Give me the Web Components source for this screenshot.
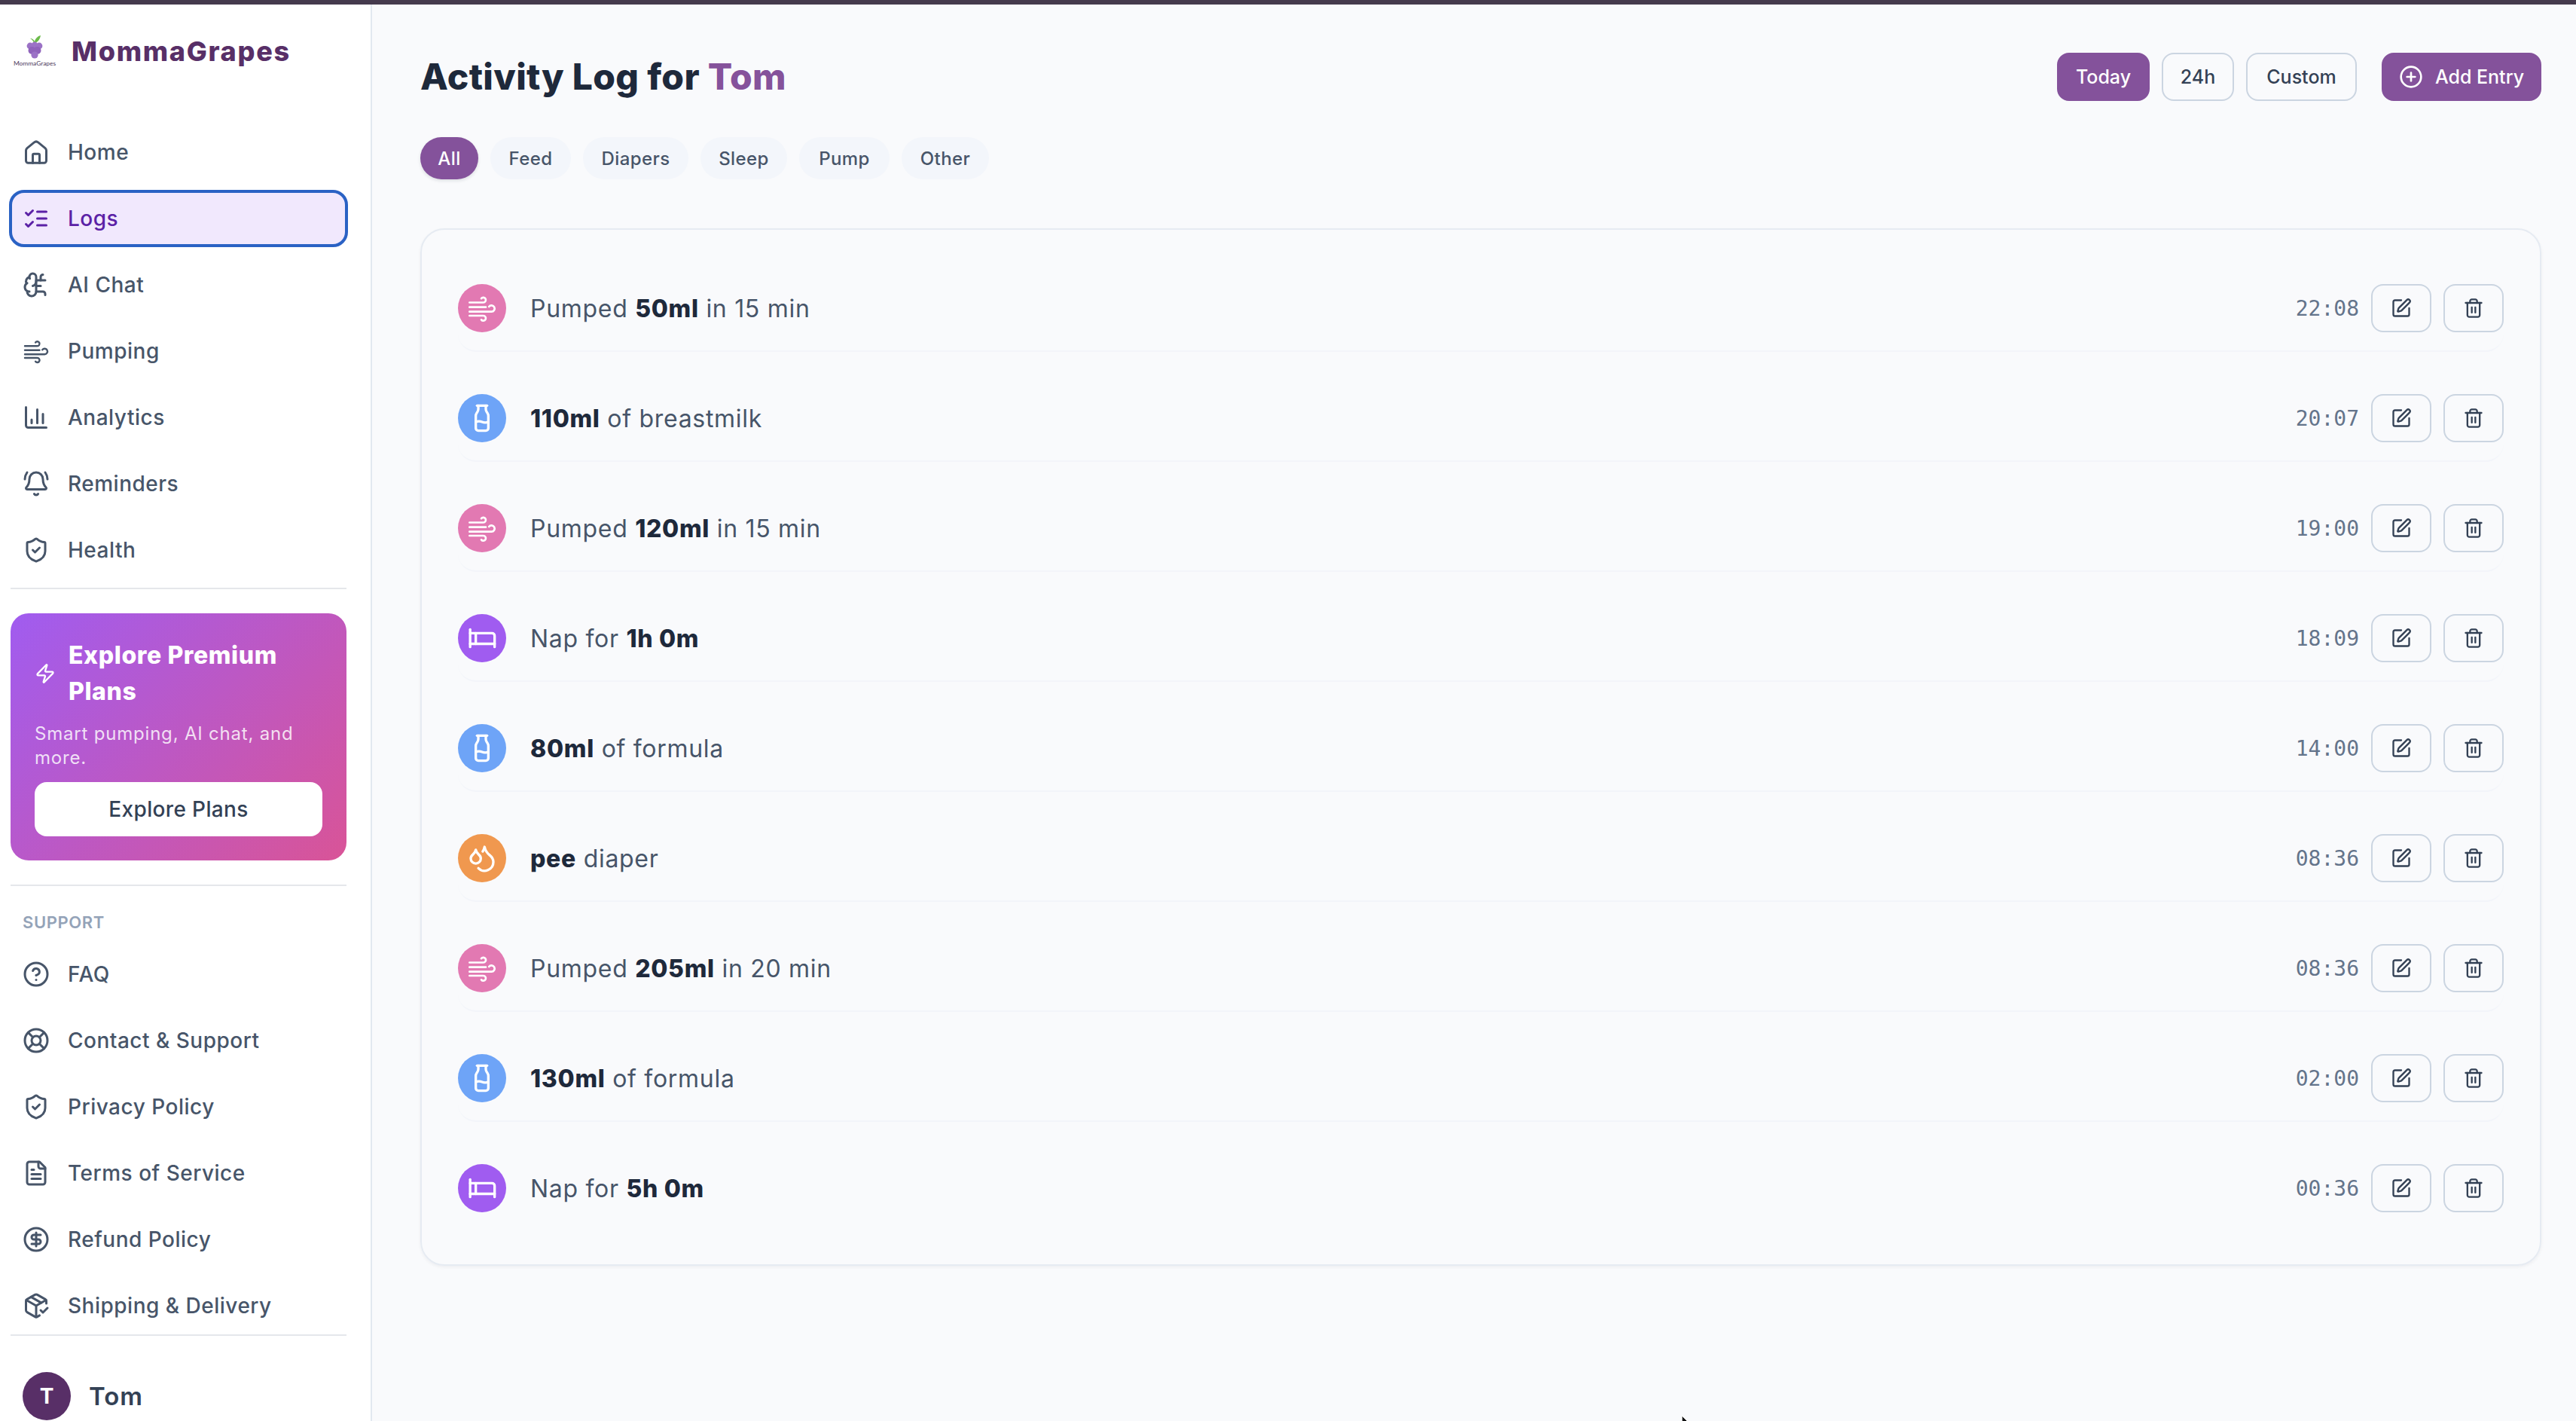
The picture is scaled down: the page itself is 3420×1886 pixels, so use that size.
<!DOCTYPE html>
<html lang="en">
<head>
<meta charset="utf-8">
<title>MommaGrapes - Activity Log</title>
<style>
  html, body { margin: 0; height: 100%; }
  body { background: #f9fafc; font-family: Inter, "Liberation Sans", sans-serif; overflow: hidden; }
</style>
</head>
<body>
<mg-app>
  <mg-sidebar slot="side">
    <mg-nav icon="home">Home</mg-nav>
    <mg-nav icon="logs" active>Logs</mg-nav>
    <mg-nav icon="brain">AI Chat</mg-nav>
    <mg-nav icon="wind">Pumping</mg-nav>
    <mg-nav icon="chart">Analytics</mg-nav>
    <mg-nav icon="bell">Reminders</mg-nav>
    <mg-nav icon="shield">Health</mg-nav>
    <mg-promo slot="promo"></mg-promo>
    <mg-nav slot="support" icon="help">FAQ</mg-nav>
    <mg-nav slot="support" icon="buoy">Contact &amp; Support</mg-nav>
    <mg-nav slot="support" icon="shield">Privacy Policy</mg-nav>
    <mg-nav slot="support" icon="file">Terms of Service</mg-nav>
    <mg-nav slot="support" icon="dollar">Refund Policy</mg-nav>
    <mg-nav slot="support" icon="package">Shipping &amp; Delivery</mg-nav>
  </mg-sidebar>
  <mg-log slot="main">
    <mg-btn slot="ranges" solid style="width:123px">Today</mg-btn>
    <mg-btn slot="ranges" style="width:96px">24h</mg-btn>
    <mg-btn slot="ranges" style="width:147px">Custom</mg-btn>
    <mg-btn slot="add" solid icon="plus" style="width:212px">Add Entry</mg-btn>
    <mg-pill slot="pills" active style="width:77px">All</mg-pill>
    <mg-pill slot="pills" style="width:107px">Feed</mg-pill>
    <mg-pill slot="pills" style="width:140px">Diapers</mg-pill>
    <mg-pill slot="pills" style="width:115px">Sleep</mg-pill>
    <mg-pill slot="pills" style="width:120px">Pump</mg-pill>
    <mg-pill slot="pills" style="width:116px">Other</mg-pill>
    <mg-row kind="pump" time="22:08">Pumped <strong>50ml</strong> in 15 min</mg-row>
    <mg-row kind="feed" time="20:07"><strong>110ml</strong> of breastmilk</mg-row>
    <mg-row kind="pump" time="19:00">Pumped <strong>120ml</strong> in 15 min</mg-row>
    <mg-row kind="sleep" time="18:09">Nap for <strong>1h 0m</strong></mg-row>
    <mg-row kind="feed" time="14:00"><strong>80ml</strong> of formula</mg-row>
    <mg-row kind="diaper" time="08:36"><strong>pee</strong> diaper</mg-row>
    <mg-row kind="pump" time="08:36">Pumped <strong>205ml</strong> in 20 min</mg-row>
    <mg-row kind="feed" time="02:00"><strong>130ml</strong> of formula</mg-row>
    <mg-row kind="sleep" time="00:36" last>Nap for <strong>5h 0m</strong></mg-row>
  </mg-log>
</mg-app>

<script>
const ICONS = {
  home: '<path d="M3 10.5c0-.9.3-1.5 1-2.1l6.3-5.1a2.6 2.6 0 0 1 3.4 0L20 8.4c.7.6 1 1.2 1 2.1v9a2 2 0 0 1-2 2H5a2 2 0 0 1-2-2z"/><path d="M9 21.5v-7a1 1 0 0 1 1-1h4a1 1 0 0 1 1 1v7"/>',
  logs: '<path d="m3 17 2 2 4-4"/><path d="m3 7 2 2 4-4"/><path d="M13 6h8"/><path d="M13 12h8"/><path d="M13 18h8"/>',
  brain: '<path d="M12 5a3 3 0 1 0-5.997.125 4 4 0 0 0-2.526 5.77 4 4 0 0 0 .556 6.588A4 4 0 1 0 12 18Z"/><path d="M9 13a4.5 4.5 0 0 0 3-4"/><path d="M6.003 5.125A3 3 0 0 0 6.401 6.5"/><path d="M3.477 10.896a4 4 0 0 1 .585-.396"/><path d="M6 18a4 4 0 0 1-1.967-.516"/><path d="M12 13h4"/><path d="M12 18h6a2 2 0 0 1 2 2v1"/><path d="M12 8h8"/><path d="M16 8V5a2 2 0 0 1 2-2"/>',
  wind: '<path d="M2 7.5h11a2 2 0 1 0-1.6-3.2"/><path d="M2 11.2h13"/><path d="M2 14.8h17.5a2.5 2.5 0 1 0-2-4"/><path d="M2 18h11a2 2 0 1 1-1.6 3.2"/>',
  chart: '<path d="M3 3v16a2 2 0 0 0 2 2h16"/><path d="M18 17V9"/><path d="M13 17V5"/><path d="M8 17v-3"/>',
  bell: '<path d="M10.268 21a2 2 0 0 0 3.464 0"/><path d="M22 8c0-2.3-.8-4.3-2-6"/><path d="M3.262 15.326A1 1 0 0 0 4 17h16a1 1 0 0 0 .74-1.673C19.41 13.956 18 12.499 18 8A6 6 0 0 0 6 8c0 4.499-1.411 5.956-2.738 7.326"/><path d="M4 2C2.8 3.7 2 5.7 2 8"/>',
  shield: '<path d="M20 13c0 5-3.5 7.5-7.66 8.95a1 1 0 0 1-.67-.01C7.5 20.5 4 18 4 13V6a1 1 0 0 1 1-1c2 0 4.5-1.2 6.24-2.72a1.17 1.17 0 0 1 1.52 0C14.51 3.81 17 5 19 5a1 1 0 0 1 1 1z"/><path d="m9 12 2 2 4-4"/>',
  help: '<circle cx="12" cy="12" r="10"/><path d="M9.09 9a3 3 0 0 1 5.83 1c0 2-3 3-3 3"/><path d="M12 17h.01"/>',
  buoy: '<circle cx="12" cy="12" r="10"/><path d="m4.93 4.93 4.24 4.24"/><path d="m14.83 9.17 4.24-4.24"/><path d="m14.83 14.83 4.24 4.24"/><path d="m9.17 14.83-4.24 4.24"/><circle cx="12" cy="12" r="4"/>',
  file: '<path d="M15 2H6a2 2 0 0 0-2 2v16a2 2 0 0 0 2 2h12a2 2 0 0 0 2-2V7Z"/><path d="M14 2v4a2 2 0 0 0 2 2h4"/><path d="M10 9H8"/><path d="M16 13H8"/><path d="M16 17H8"/>',
  dollar: '<circle cx="12" cy="12" r="10"/><path d="M16 8h-6a2 2 0 1 0 0 4h4a2 2 0 1 1 0 4H8"/><path d="M12 18V6"/>',
  package: '<path d="m16 16 2 2 4-4"/><path d="M21 10V8a2 2 0 0 0-1-1.73l-7-4a2 2 0 0 0-2 0l-7 4A2 2 0 0 0 3 8v8a2 2 0 0 0 1 1.73l7 4a2 2 0 0 0 2 0l2-1.14"/><path d="m7.5 4.27 9 5.15"/><path d="M3.29 7 12 12l8.71-5"/><path d="M12 22V12"/>',
  zap: '<path d="M4 14a1 1 0 0 1-.78-1.63l9.9-10.2a.5.5 0 0 1 .86.46l-1.92 6.02A1 1 0 0 0 13 10h7a1 1 0 0 1 .78 1.63l-9.9 10.2a.5.5 0 0 1-.86-.46l1.92-6.02A1 1 0 0 0 11 14z"/>',
  plus: '<circle cx="12" cy="12" r="10"/><path d="M8 12h8"/><path d="M12 8v8"/>',
  edit: '<path d="M12 3H5a2 2 0 0 0-2 2v14a2 2 0 0 0 2 2h14a2 2 0 0 0 2-2v-7"/><path d="M18.375 2.625a1 1 0 0 1 3 3l-9.013 9.014a2 2 0 0 1-.853.505l-2.873.84a.5.5 0 0 1-.62-.62l.84-2.873a2 2 0 0 1 .506-.852z"/>',
  trash: '<path d="M3 6h18"/><path d="M19 6v14c0 1-1 2-2 2H7c-1 0-2-1-2-2V6"/><path d="M8 6V4c0-1 1-2 2-2h4c1 0 2 1 2 2v2"/><path d="M10 11v6"/><path d="M14 11v6"/>',
  milk: '<path d="M8 2h8"/><path d="M9 2v2.789a4 4 0 0 1-.672 2.219l-.656.984A4 4 0 0 0 7 10.212V20a2 2 0 0 0 2 2h6a2 2 0 0 0 2-2v-9.789a4 4 0 0 0-.672-2.219l-.656-.984A4 4 0 0 1 15 4.788V2"/><path d="M7 15a6.472 6.472 0 0 1 5 0 6.47 6.47 0 0 0 5 0"/>',
  bed: '<path d="M2.5 5v14"/><path d="M2.5 8H20a2 2 0 0 1 2 2v9"/><path d="M2.5 16.5H22"/><path d="M7 8v8.5"/>',
  drops: '<path d="M7 16.3c2.2 0 4-1.83 4-4.05 0-1.16-.57-2.26-1.71-3.19S7.29 6.75 7 5.3c-.29 1.45-1.14 2.84-2.29 3.76S3 11.1 3 12.25c0 2.22 1.8 4.05 4 4.05z"/><path d="M12.56 6.6A10.97 10.97 0 0 0 14 3.02c.5 2.5 2 4.9 4 6.5s3 3.5 3 5.5a6.98 6.98 0 0 1-11.91 4.97"/>'
};

function svg(name, size, weight) {
  return `<svg width="${size}" height="${size}" viewBox="0 0 24 24" fill="none" stroke="currentColor" stroke-width="${weight || (name === 'wind' ? 1.6 : 2)}" stroke-linecap="round" stroke-linejoin="round">${ICONS[name]}</svg>`;
}

class MgApp extends HTMLElement {
  constructor() {
    super();
    this.attachShadow({mode: 'open'}).innerHTML = `
      <style>
        :host { display: flex; flex-direction: column; height: 100vh; overflow: hidden; position: relative; }
        .strip { height: 6px; flex: none; background: #453a4d; }
        .body { flex: 1; display: flex; min-height: 0; }
        svg { position: absolute; left: 2232px; top: 1878px; }
      </style>
      <div class="strip"></div>
      <div class="body"><slot name="side"></slot><slot name="main"></slot></div>
      <svg width="12" height="16" viewBox="0 0 12 16"><path d="M1 1v12l3-3 2 5 2-1-2-4h4z" fill="#111" stroke="#fff"/></svg>
    `;
  }
}

class MgSidebar extends HTMLElement {
  constructor() {
    super();
    this.attachShadow({mode: 'open'}).innerHTML = `
      <style>
        :host { display: block; flex: none; box-sizing: border-box; width: 494px; height: 1880px; background: #fff; border-right: 2px solid #e2e8f0; padding: 0 30px 0 12px; overflow: hidden; }
        .brand { display: flex; align-items: center; gap: 23px; height: 158px; padding: 0 0 34px 8px; box-sizing: border-box; }
        .brand b { font-size: 36px; line-height: 44px; font-weight: 800; color: #582f67; letter-spacing: 1.7px; }
        .logo { flex: none; width: 52px; display: flex; flex-direction: column; align-items: center; }
        .logo svg { display: block; }
        .logo span { font-family: Lato, sans-serif; font-size: 8.4px; line-height: 11px; color: #4e3a5c; white-space: nowrap; }
        .list { display: flex; flex-direction: column; gap: 12px; }
        .rule { height: 2px; background: #e5e7eb; margin: 0 2px; }
        .rule.a { margin-top: 12px; }
        .rule.b { margin-top: 32px; }
        ::slotted(mg-promo) { margin: 32px 2px 0; }
        .label { font-size: 22px; line-height: 32px; font-weight: 600; color: #94a3b8; padding-left: 18px; margin: 32px 0 15px; letter-spacing: .6px; }
        .user { display: flex; align-items: center; gap: 24px; padding: 48px 0 0 18px; font-size: 33px; font-weight: 600; color: #334155; letter-spacing: 1px; }
        .av { width: 64px; height: 64px; border-radius: 50%; background: #582f67; color: #fff; font-size: 28px; font-weight: 700; letter-spacing: 0; display: flex; align-items: center; justify-content: center; }
      </style>
      <div class="brand">
        <div class="logo">
          <svg width="52" height="33" viewBox="0 0 52 33">
            <path d="M25 11c-1-3-3-5-5-6 3 0 5 2 6 4 1-4 4-7 8-8-1 5-3 8-7 10z" fill="#6cbb4a"/>
            <g fill="#9b72c6">
              <circle cx="20" cy="15" r="4.4"/><circle cx="26" cy="14" r="4.4"/><circle cx="32" cy="15" r="4.4"/>
              <circle cx="22.5" cy="21" r="5" fill="#8f63bb"/><circle cx="29.5" cy="21" r="5" fill="#8f63bb"/>
              <circle cx="26" cy="27" r="4.6"/>
            </g>
          </svg>
          <span>MommaGrapes</span>
        </div>
        <b>MommaGrapes</b>
      </div>
      <div class="list"><slot></slot></div>
      <div class="rule a"></div>
      <slot name="promo"></slot>
      <div class="rule b"></div>
      <div class="label">SUPPORT</div>
      <div class="list"><slot name="support"></slot></div>
      <div class="rule"></div>
      <div class="user"><span class="av">T</span><span>Tom</span></div>
    `;
  }
}

class MgNav extends HTMLElement {
  constructor() {
    super();
    this.attachShadow({mode: 'open'}).innerHTML = `
      <style>
        :host { display: flex; align-items: center; gap: 24px; box-sizing: border-box; height: 76px; padding-left: 18px; width: 450px; border-radius: 20px; font-size: 28px; font-weight: 500; letter-spacing: .5px; color: #475569; }
        :host([active]) { background: #f1e8fd; color: #5b21a6; outline: 4px solid #2a62c4; outline-offset: -4px; }
        svg { flex: none; }
      </style>
      ${svg(this.getAttribute('icon'), 36)}
      <span><slot></slot></span>
    `;
  }
}

class MgPromo extends HTMLElement {
  constructor() {
    super();
    this.attachShadow({mode: 'open'}).innerHTML = `
      <style>
        :host { display: block; box-sizing: border-box; height: 328px; border-radius: 24px; padding: 32px; color: #fff; background: linear-gradient(135deg, #a05cf0, #d95497); }
        .head { display: flex; align-items: center; gap: 17px; font-size: 32px; line-height: 48px; font-weight: 800; letter-spacing: .6px; }
        svg { flex: none; }
        p { margin: 16px 0 16px; font-size: 24px; line-height: 32px; color: rgba(255,255,255,.82); letter-spacing: .8px; }
        .go { height: 72px; border-radius: 16px; background: #fff; color: #334155; font-size: 28px; font-weight: 500; letter-spacing: .35px; display: flex; align-items: center; justify-content: center; }
      </style>
      <div class="head">${svg('zap', 28)}<span>Explore Premium Plans</span></div>
      <p>Smart pumping, AI chat, and more.</p>
      <div class="go">Explore Plans</div>
    `;
  }
}

class MgLog extends HTMLElement {
  constructor() {
    super();
    this.attachShadow({mode: 'open'}).innerHTML = `
      <style>
        :host { display: block; flex: 1; min-width: 0; padding: 64px 46px 0 64px; }
        .top { display: flex; align-items: center; justify-content: space-between; height: 64px; }
        h1 { margin: 0; font-size: 48px; line-height: 64px; font-weight: 800; color: #1e293b; letter-spacing: .35px; }
        h1 span { color: #85529b; }
        .acts { display: flex; gap: 33px; }
        .ranges { display: flex; gap: 16px; }
        .pills { display: flex; gap: 16px; margin-top: 48px; }
        .card { box-sizing: border-box; margin-top: 65px; height: 1377px; border: 2px solid #e6ebf2; border-radius: 32px; box-shadow: 0 2px 4px rgba(15,23,42,.05); padding: 48px; display: flex; flex-direction: column; gap: 32px; }
      </style>
      <div class="top">
        <h1>Activity Log for <span>Tom</span></h1>
        <div class="acts">
          <div class="ranges"><slot name="ranges"></slot></div>
          <slot name="add"></slot>
        </div>
      </div>
      <div class="pills"><slot name="pills"></slot></div>
      <div class="card"><slot></slot></div>
    `;
  }
}

class MgBtn extends HTMLElement {
  constructor() {
    super();
    const icon = this.getAttribute('icon');
    this.attachShadow({mode: 'open'}).innerHTML = `
      <style>
        :host { display: flex; align-items: center; justify-content: center; gap: 16px; box-sizing: border-box; height: 64px; border-radius: 16px; border: 2px solid #cbd5e1; font-size: 25px; font-weight: 500; color: #334155; }
        :host([solid]) { background: #84529b; border-color: #84529b; color: #fff; }
      </style>
      ${icon ? svg(icon, 32) : ''}<slot></slot>
    `;
  }
}

class MgPill extends HTMLElement {
  constructor() {
    super();
    this.attachShadow({mode: 'open'}).innerHTML = `
      <style>
        :host { display: flex; align-items: center; justify-content: center; box-sizing: border-box; height: 56px; border-radius: 28px; background: #f3f6fb; font-size: 24px; font-weight: 500; color: #475569; letter-spacing: .4px; }
        :host([active]) { background: #84529b; color: #fff; box-shadow: 0 2px 4px rgba(15,23,42,.12); }
      </style>
      <slot></slot>
    `;
  }
}

const KINDS = {
  pump: {color: '#e279b2', icon: 'wind'},
  feed: {color: '#6ea4f7', icon: 'milk'},
  sleep: {color: '#a05cf0', icon: 'bed'},
  diaper: {color: '#f0984f', icon: 'drops'}
};

class MgRow extends HTMLElement {
  constructor() {
    super();
    const kind = KINDS[this.getAttribute('kind')];
    this.attachShadow({mode: 'open'}).innerHTML = `
      <style>
        :host { display: flex; align-items: center; box-sizing: border-box; height: 114px; padding: 24px 0; border-bottom: 2px solid #f3f5fa; border-radius: 24px; color: #475569; font-size: 32px; }
        :host([last]) { border-bottom-color: transparent; }
        .dot { flex: none; width: 64px; height: 64px; border-radius: 50%; background: ${kind.color}; color: #fff; display: flex; align-items: center; justify-content: center; margin-right: 32px; }
        .text { flex: 1; letter-spacing: .7px; }
        ::slotted(strong) { font-weight: 800; color: #1e293b; }
        time { font-family: "DejaVu Sans Mono", monospace; font-size: 28px; color: #64748b; margin-right: 16px; }
        button { box-sizing: border-box; width: 80px; height: 64px; padding: 0; border: 2px solid #cbd5e1; border-radius: 16px; background: transparent; color: #334155; display: flex; align-items: center; justify-content: center; }
        button + button { margin-left: 16px; }
      </style>
      <span class="dot">${svg(kind.icon, 40)}</span>
      <span class="text"><slot></slot></span>
      <time>${this.getAttribute('time')}</time>
      <button aria-label="Edit">${svg('edit', 28)}</button>
      <button aria-label="Delete">${svg('trash', 28)}</button>
    `;
  }
}

customElements.define('mg-app', MgApp);
customElements.define('mg-sidebar', MgSidebar);
customElements.define('mg-nav', MgNav);
customElements.define('mg-promo', MgPromo);
customElements.define('mg-log', MgLog);
customElements.define('mg-btn', MgBtn);
customElements.define('mg-pill', MgPill);
customElements.define('mg-row', MgRow);
</script>
</body>
</html>
